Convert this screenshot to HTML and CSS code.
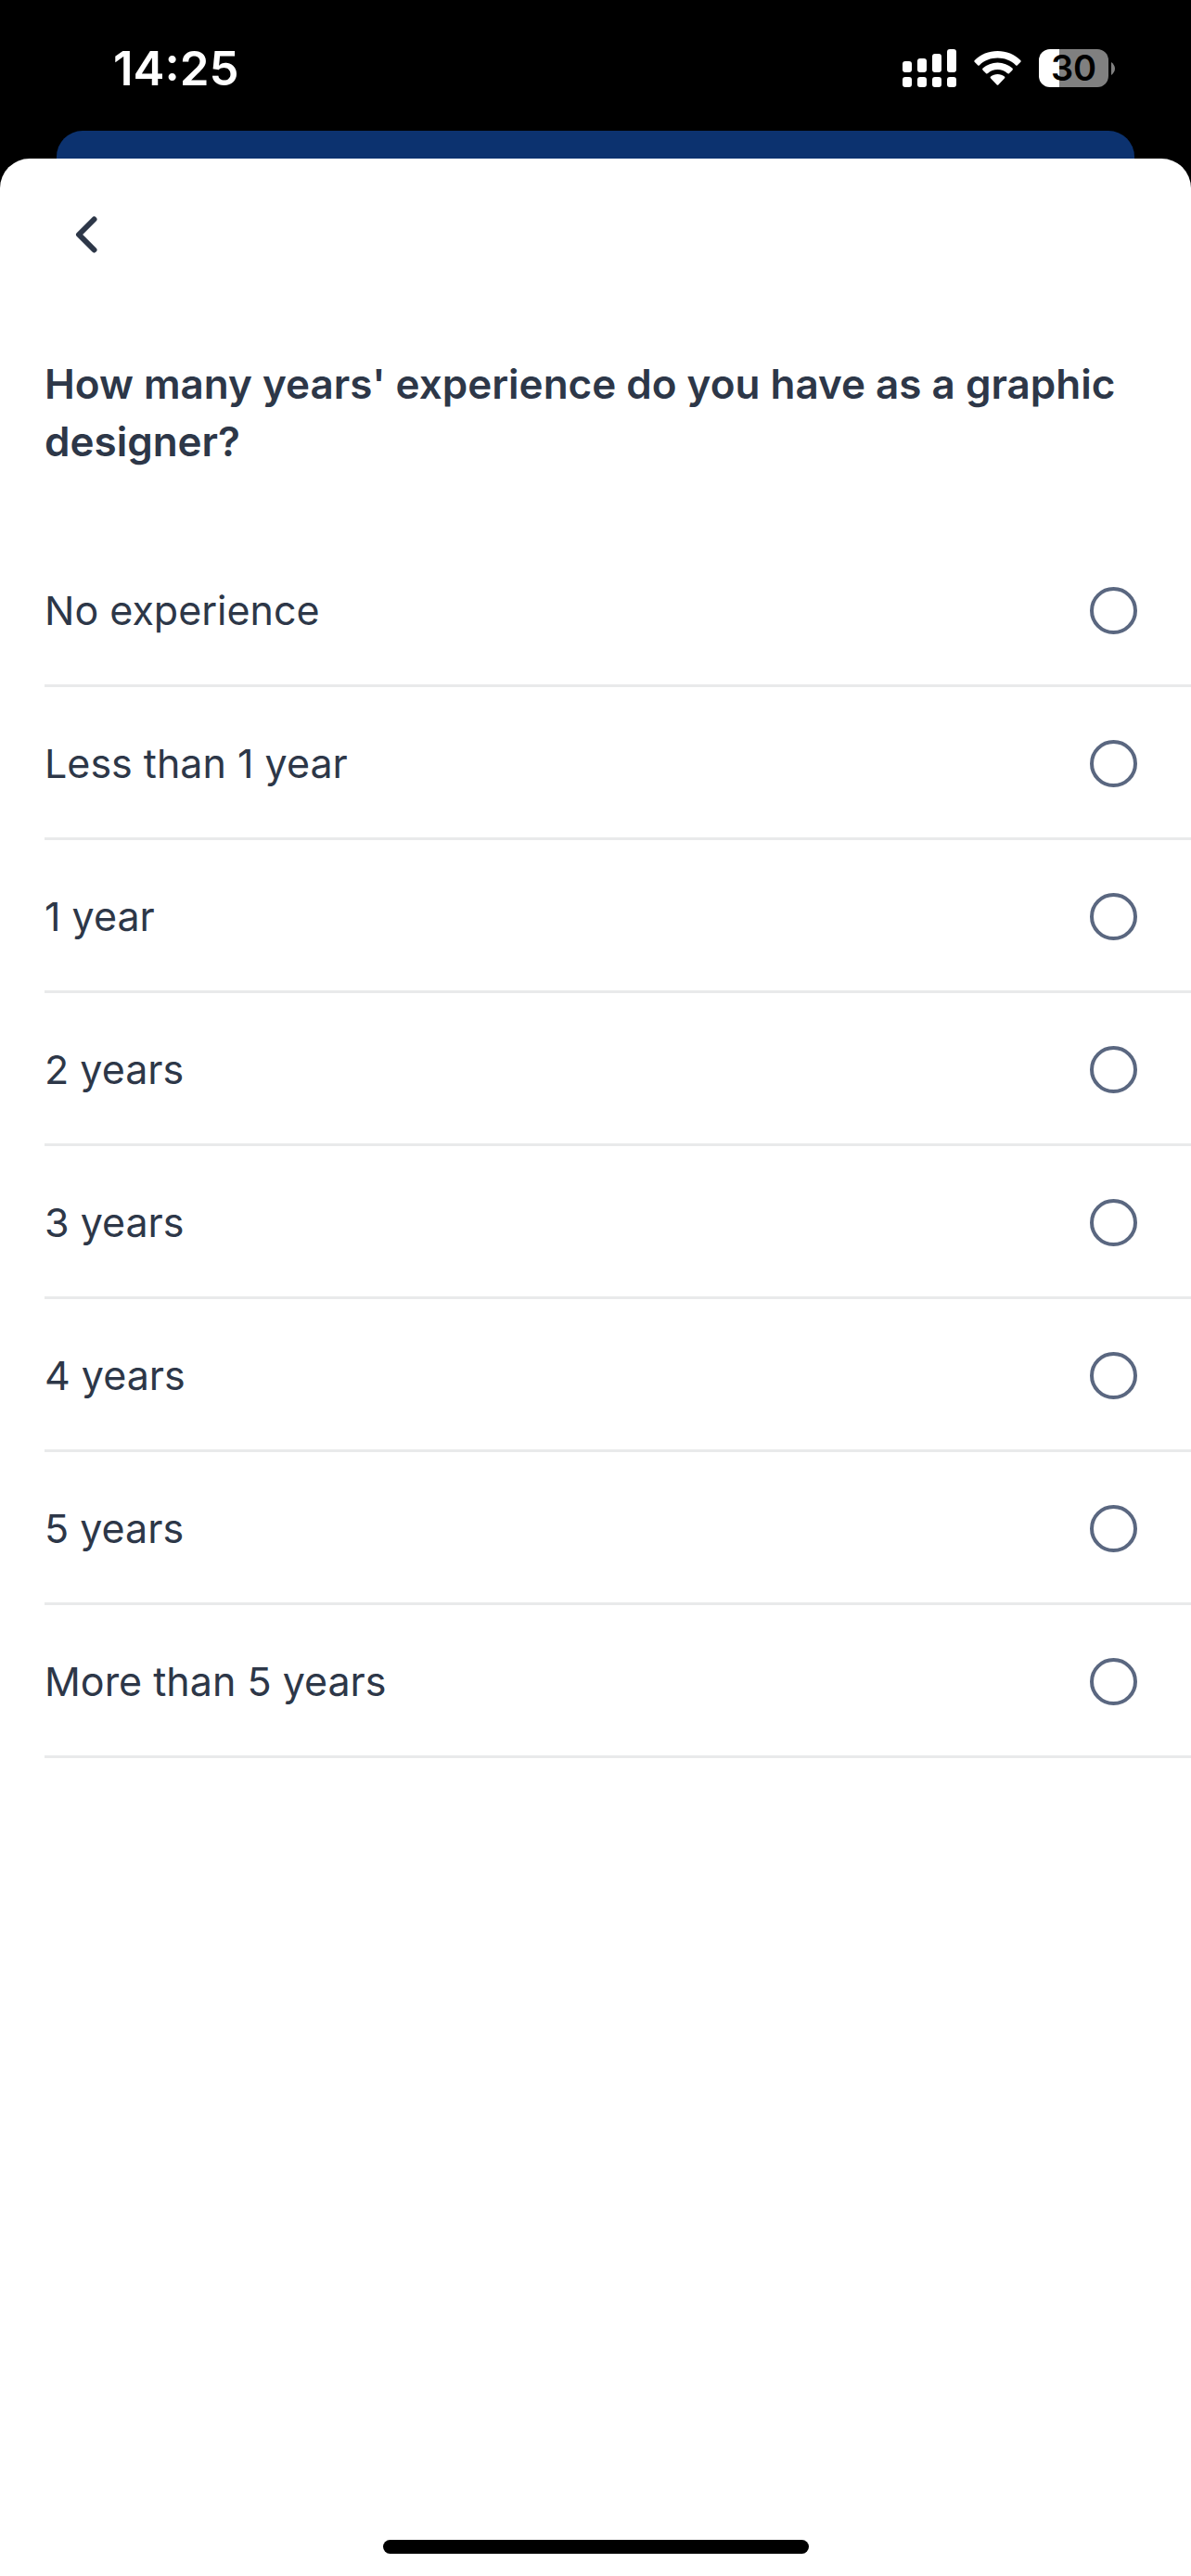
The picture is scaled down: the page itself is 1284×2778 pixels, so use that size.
FILE: index.html
```html
<!DOCTYPE html>
<html lang="en">
<head>
<meta charset="utf-8">
<meta name="viewport" content="width=device-width, initial-scale=1">
<title>Experience</title>
<link rel="stylesheet" href="styles.css">
</head>
<body>
<div class="status-bar">
  <time class="clock">14:25</time>
  <div class="indicators">
    <svg class="signal" viewBox="0 0 58 41" aria-hidden="true">
      <rect x="0" y="13" width="10" height="12" rx="3"/>
      <rect x="16" y="10" width="10" height="15" rx="3"/>
      <rect x="32" y="5" width="10" height="20" rx="3"/>
      <rect x="48" y="0" width="10" height="25" rx="3"/>
      <rect x="0" y="30" width="10" height="11" rx="3"/>
      <rect x="16" y="30" width="10" height="11" rx="3"/>
      <rect x="32" y="30" width="10" height="11" rx="3"/>
      <rect x="48" y="30" width="10" height="11" rx="3"/>
    </svg>
    <svg class="wifi" viewBox="0 0 51 41" aria-hidden="true">
      <path d="M25.500 2C35 2 43.800 5.600 50.200 11.900Q51.200 12.900 50.200 14L46.900 17.200Q46 18.200 45 17.200C39.700 12.300 32.900 9.600 25.500 9.600S11.300 12.300 6 17.200Q5 18.200 4.100 17.200L.8 14Q-.2 12.900.8 11.900C7.200 5.600 16 2 25.500 2Z"/>
      <path d="M25.500 14.400C31.700 14.400 37.100 16.700 41.400 20.600Q42.500 21.600 41.400 22.700L38.100 25.900Q37.100 26.900 36 26C33.200 23.400 29.500 22 25.500 22S17.800 23.400 15 26Q13.900 26.900 12.900 25.900L9.600 22.700Q8.500 21.600 9.600 20.600C13.900 16.700 19.300 14.400 25.500 14.400Z"/>
      <path d="M25.500 26.900C28.300 26.900 30.900 27.800 32.900 29.500Q34 30.500 32.900 31.600L26.500 38.200Q25.500 39.300 24.500 38.200L18.100 31.600Q17 30.500 18.100 29.500C20.100 27.800 22.700 26.900 25.500 26.900Z"/>
    </svg>
    <div class="battery">
      <span class="battery-level">30</span>
      <svg class="battery-cap" viewBox="0 0 4 14" aria-hidden="true"><path d="M0 0C2 1.500 4 4 4 7S2 12.500 0 14Z"/></svg>
    </div>
  </div>
</div>
<div class="backdrop-card"></div>
<main class="sheet">
  <header class="toolbar">
    <button class="back" type="button" aria-label="Back">
      <svg class="chevron" viewBox="0 0 24 40" aria-hidden="true"><path d="M20.500 3.500 4 20 20.500 36.500"/></svg>
    </button>
  </header>
  <form class="question">
    <fieldset class="choices">
      <legend class="prompt">How many years' experience do you have as a graphic designer?</legend>
      <label class="choice"><span>No experience</span><input class="radio" type="radio" name="experience" value="none"></label>
      <label class="choice"><span>Less than 1 year</span><input class="radio" type="radio" name="experience" value="under-1"></label>
      <label class="choice"><span>1 year</span><input class="radio" type="radio" name="experience" value="1"></label>
      <label class="choice"><span>2 years</span><input class="radio" type="radio" name="experience" value="2"></label>
      <label class="choice"><span>3 years</span><input class="radio" type="radio" name="experience" value="3"></label>
      <label class="choice"><span>4 years</span><input class="radio" type="radio" name="experience" value="4"></label>
      <label class="choice"><span>5 years</span><input class="radio" type="radio" name="experience" value="5"></label>
      <label class="choice"><span>More than 5 years</span><input class="radio" type="radio" name="experience" value="over-5"></label>
    </fieldset>
  </form>
  <div class="home-indicator"></div>
</main>
</body>
</html>
```
FILE: styles.css
```css
* {
  box-sizing: border-box;
}

body {
  display: flex;
  flex-direction: column;
  min-height: 100vh;
  margin: 0;
  background: #000;
  color: #2d3748;
  font-family: Inter, "Liberation Sans", sans-serif;
  font-size: 43px;
  line-height: 62px;
}

.status-bar {
  display: flex;
  align-items: center;
  justify-content: space-between;
  padding: 40px 82px 34px 122px;
  color: #fff;
}

.clock {
  font-size: 51px;
  font-weight: 600;
  line-height: 67px;
}

.indicators {
  display: flex;
  align-items: center;
  gap: 19px;
}

.signal {
  width: 58px;
  height: 41px;
  fill: #fff;
}

.wifi {
  width: 51px;
  height: 41px;
  fill: #fff;
}

.battery {
  display: flex;
  align-items: center;
  gap: 3px;
}

.battery-level {
  width: 75px;
  border-radius: 12px;
  background: linear-gradient(to right, #fff 30%, #808080 30%);
  color: #000;
  font-size: 38px;
  font-weight: 600;
  line-height: 41px;
  text-align: center;
}

.battery-cap {
  width: 4px;
  height: 14px;
  fill: #808080;
}

.backdrop-card {
  height: 62px;
  margin: 0 61px -32px;
  border-radius: 28px 28px 0 0;
  background: #0c326f;
}

.sheet {
  display: flex;
  flex: 1;
  flex-direction: column;
  border-radius: 32px 32px 0 0;
  background: #fff;
}

.toolbar {
  padding: 46px 65px;
}

.back {
  display: flex;
  padding: 16px;
  border: 0;
  background: none;
}

.chevron {
  width: 24px;
  height: 40px;
  fill: none;
  stroke: #2d3748;
  stroke-width: 6;
  stroke-linecap: round;
  stroke-linejoin: round;
}

.question {
  flex: 1;
  padding-left: 48px;
}

.choices {
  min-width: 0;
  margin: 0;
  padding: 0;
  border: 0;
}

.prompt {
  padding: 48px 64px 69px 0;
  font-size: 44px;
  font-weight: 600;
}

.choice {
  display: flex;
  align-items: center;
  justify-content: space-between;
  padding: 51px 58px 49px 0;
  border-bottom: 3px solid #e9eaeb;
}

.radio {
  width: 51px;
  height: 51px;
  margin: 0;
  border: 4px solid #5a6780;
  border-radius: 50%;
  appearance: none;
}

.radio:checked {
  border-width: 16px;
}

.home-indicator {
  width: 100%;
  max-width: 459px;
  height: 15px;
  margin: 24px auto;
  border-radius: 8px;
  background: #000;
}
```
